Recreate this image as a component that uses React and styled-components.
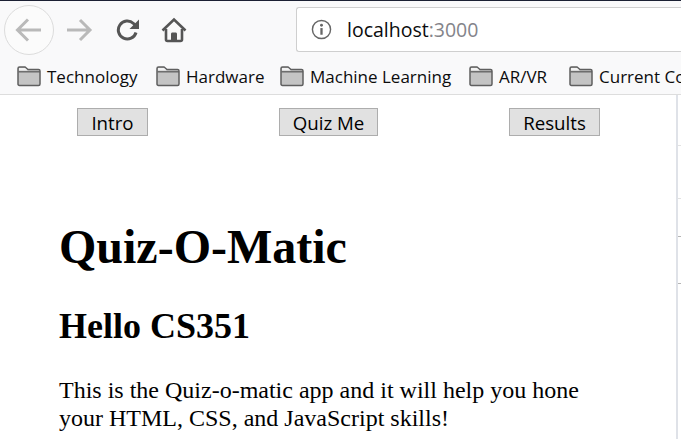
import React from "react";
import styled, { createGlobalStyle } from "styled-components";

const GlobalStyle = createGlobalStyle`
  html, body {
    margin: 0;
    padding: 0;
    background: #fff;
    overflow: hidden;
  }
`;

function FolderIcon() {
  return (
    <FolderSvg width="24" height="22" viewBox="0 0 24 22">
      <path
        d="M1 5V3.500C1 2.500 1.700 2 2.500 2H8l3 2.500h10.500c.9 0 1.500.6 1.500 1.500v13c0 .9-.6 1.500-1.500 1.500h-19C1.600 20.500 1 19.900 1 19V5z"
        fill="#c4c4c4"
        stroke="#5f5f5f"
        strokeWidth="1.500"
      />
      <path d="M1.500 6.800H23" stroke="#5f5f5f" strokeWidth="1.300" fill="none" />
      <path d="M2 3h6l2.600 2.600H2z" fill="#f2f2f2" />
    </FolderSvg>
  );
}

const bookmarks = [
  { name: "Technology", width: 139 },
  { name: "Hardware", width: 124 },
  { name: "Machine Learning", width: 189 },
  { name: "AR/VR", width: 100 },
  { name: "Current Co", width: 112 },
];

function App() {
  return (
    <Page>
      <GlobalStyle />
      <TopEdge />
      <Toolbar>
        <BackButton>
          <svg width="28" height="28" viewBox="0 0 28 28" fill="none" stroke="#b9b9b9" strokeWidth="3">
            <path d="M26 14H3M13 3.500L2.500 14 13 24.500" />
          </svg>
        </BackButton>
        <ToolIcon $width={26} $margin={13}>
          <svg width="26" height="24" viewBox="0 0 26 24" fill="none" stroke="#b9b9b9" strokeWidth="3">
            <path d="M0 12h23M13 2l10 10-10 10" />
          </svg>
        </ToolIcon>
        <ToolIcon $width={24} $margin={23}>
          <svg width="24" height="24" viewBox="0 0 24 24" fill="none">
            <path d="M20 14.500A9 9 0 1 1 17.500 5.500L21 9" stroke="#555" strokeWidth="3" />
            <path d="M23 1.500V11H13.500z" fill="#555" />
          </svg>
        </ToolIcon>
        <ToolIcon $width={26} $margin={21}>
          <svg width="26" height="26" viewBox="0 0 26 26" fill="none">
            <path d="M1.500 13.500L13 2.500l11.500 11" stroke="#555" strokeWidth="2.600" />
            <path d="M5 12v10.500c0 1 .6 1.500 1.500 1.500h13c.9 0 1.500-.5 1.500-1.500V12" stroke="#555" strokeWidth="2.600" />
            <path d="M10 24v-7c0-1 .6-1.500 1.500-1.500h3c.9 0 1.500.5 1.500 1.500v7z" fill="#555" />
          </svg>
        </ToolIcon>
        <UrlBar>
          <svg width="21" height="21" viewBox="0 0 22 22" fill="none">
            <circle cx="11" cy="11" r="9.500" stroke="#666" strokeWidth="1.500" />
            <circle cx="11" cy="6.500" r="1.500" fill="#666" />
            <path d="M11 9.500v7" stroke="#666" strokeWidth="2.400" />
          </svg>
          <UrlText>
            localhost<UrlPort>:3000</UrlPort>
          </UrlText>
        </UrlBar>
      </Toolbar>
      <BookmarkBar>
        {bookmarks.map(item => (
          <Bookmark key={item.name} $width={item.width}>
            <FolderIcon />
            {item.name}
          </Bookmark>
        ))}
      </BookmarkBar>
      <Body>
        <Main>
          <Nav>
            <NavButton $width={71}>Intro</NavButton>
            <NavButton $width={99}>Quiz Me</NavButton>
            <NavButton $width={91}>Results</NavButton>
          </Nav>
          <Content>
            <Title>Quiz-O-Matic</Title>
            <Subtitle>Hello CS351</Subtitle>
            <Intro>
              This is the Quiz-o-matic app and it will help you hone your HTML, CSS, and JavaScript skills!
            </Intro>
          </Content>
        </Main>
        <SidePanel>
          <SideLine $height={53} />
          <SideLine $height={38} />
          <SideLine $height={47} $dark />
          <SideLine $height={10} $dark />
        </SidePanel>
      </Body>
    </Page>
  );
}

const Page = styled.div`
  width: 681px;
  height: 439px;
  overflow: hidden;
  display: flex;
  flex-direction: column;
  font-family: "Open Sans", sans-serif;
`;

const TopEdge = styled.div`
  height: 1px;
  background: #1b2033;
`;

const Toolbar = styled.div`
  height: 57px;
  display: flex;
  align-items: center;
  background: #f9f9fa;
`;

const BackButton = styled.div`
  width: 50px;
  height: 50px;
  margin-left: 4px;
  box-sizing: border-box;
  border: 1px solid #dcdcdc;
  border-radius: 50%;
  background: #fbfbfb;
  display: flex;
  align-items: center;
  justify-content: center;
`;

const ToolIcon = styled.div`
  width: ${p => p.$width}px;
  margin-left: ${p => p.$margin}px;
  display: flex;
  align-items: center;
`;

const UrlBar = styled.div`
  margin-left: 109px;
  flex: 1;
  height: 45px;
  box-sizing: border-box;
  background: #fff;
  border: 1px solid #cfcfcf;
  border-right: none;
  border-radius: 3px 0 0 3px;
  display: flex;
  align-items: center;
  padding-left: 14px;
  gap: 15px;
`;

const UrlText = styled.span`
  font-size: 19.500px;
  color: #0c0c0d;
`;

const UrlPort = styled.span`
  color: #84848a;
`;

const BookmarkBar = styled.div`
  height: 37px;
  box-sizing: border-box;
  display: flex;
  align-items: center;
  padding-left: 17px;
  background: #f9f9fa;
  border-bottom: 1px solid #dddddd;
  white-space: nowrap;
  overflow: hidden;
`;

const Bookmark = styled.div`
  flex: none;
  width: ${p => p.$width}px;
  display: flex;
  align-items: center;
  gap: 6px;
  font-size: 17px;
  color: #0c0c0d;
`;

const FolderSvg = styled.svg`
  flex: none;
`;

const Body = styled.div`
  flex: 1;
  display: flex;
  min-height: 0;
`;

const Main = styled.div`
  flex: 1;
  background: #fff;
`;

const Nav = styled.nav`
  display: flex;
  gap: 131px;
  padding: 13px 0 0 77px;
`;

const NavButton = styled.button`
  width: ${p => p.$width}px;
  height: 28px;
  padding: 0;
  box-sizing: border-box;
  background: #e1e1e1;
  border: 1px solid #adadad;
  border-radius: 0;
  font-family: "Open Sans", sans-serif;
  font-size: 18.700px;
  color: #000;
`;

const Content = styled.div`
  padding: 83px 90px 0 59px;
  font-family: "Liberation Serif", serif;
  color: #000;
`;

const Title = styled.h1`
  margin: 0;
  font-size: 48px;
  line-height: 55px;
`;

const Subtitle = styled.h2`
  margin: 32px 0 0;
  font-size: 36px;
  line-height: 40px;
`;

const Intro = styled.p`
  margin: 30px 0 0;
  font-size: 24px;
  line-height: 28px;
`;

const SidePanel = styled.div`
  width: 5px;
  box-sizing: border-box;
  border-left: 2px solid #dfe2e8;
  padding-top: 50px;
  background: #fff;
`;

const SideLine = styled.div`
  height: ${p => p.$height}px;
  box-sizing: border-box;
  border-top: 1px solid ${p => (p.$dark ? "#b5b5b5" : "#e2e2e2")};
`;

export default App;
